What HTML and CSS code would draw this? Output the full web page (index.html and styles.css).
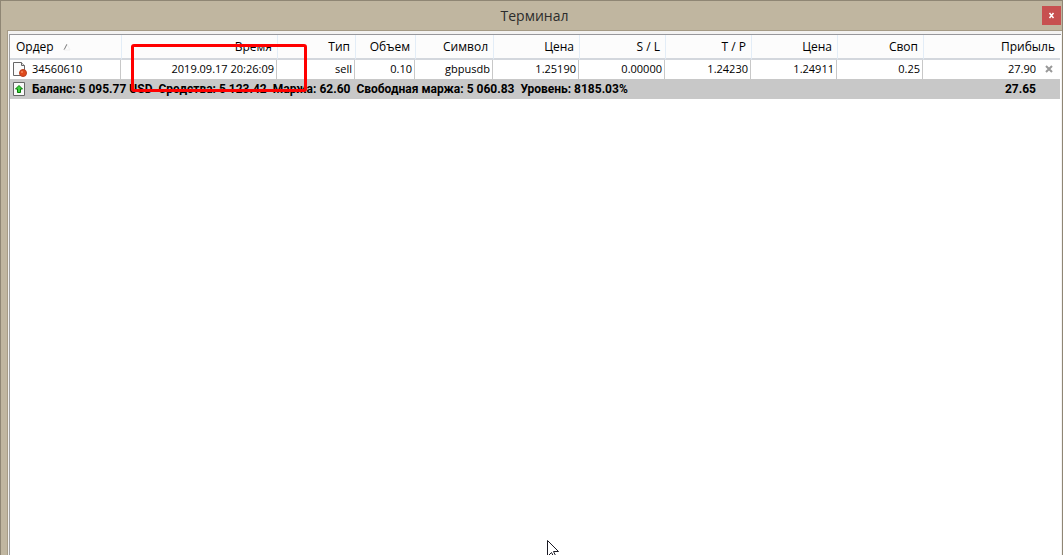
FILE: index.html
```html
<!DOCTYPE html>
<html lang="ru">
<head>
    <meta charset="UTF-8">
    <meta name="viewport" content="width=device-width, initial-scale=1.0">
    <title>Терминал</title>
    <link rel="stylesheet" href="styles.css">
</head>
<body>

<div class="window">
    <header class="titlebar">
        <h1>Терминал</h1>
        <button type="button" class="close" aria-label="Закрыть">
            <svg width="7" height="7" viewBox="0 0 7 7"><path d="M1.500 1l4 5M5.500 1l-4 5" stroke="#fff" stroke-width="1.500"/></svg>
        </button>
    </header>

    <main class="panel">
        <table class="orders">
            <colgroup>
                <col class="col-order">
                <col class="col-time">
                <col class="col-symbol">
                <col class="col-volume">
                <col class="col-symbol">
                <col class="col-price">
                <col class="col-price">
                <col class="col-price">
                <col class="col-price">
                <col class="col-price">
                <col>
            </colgroup>
            <thead>
                <tr>
                    <th class="first">Ордер
                        <svg class="sort" width="8" height="8" viewBox="0 0 8 8"><path d="M1 7L4 1" stroke="#777"/><path d="M4 1l3 6H1" fill="none" stroke="#f0f0f0"/></svg>
                    </th>
                    <th>Время</th>
                    <th>Тип</th>
                    <th>Объем</th>
                    <th>Символ</th>
                    <th>Цена</th>
                    <th>S / L</th>
                    <th>T / P</th>
                    <th>Цена</th>
                    <th>Своп</th>
                    <th>Прибыль</th>
                </tr>
            </thead>
            <tbody>
                <tr>
                    <td class="first">
                        <div class="cell">
                            <svg width="14" height="16" viewBox="0 0 14 16">
                                <path d="M.5 1.5h8l3 3v10H.5z" fill="#fbfbfb" stroke="#666"/>
                                <path d="M8.5 1.5v3h3" fill="#ddd" stroke="#666"/>
                                <circle cx="10" cy="12" r="3.5" fill="#e04a1c" stroke="#b84020"/>
                                <circle cx="9" cy="11" r="1" fill="#f58a5c"/>
                            </svg>
                            <span>34560610</span>
                        </div>
                    </td>
                    <td>2019.09.17 20:26:09</td>
                    <td>sell</td>
                    <td>0.10</td>
                    <td>gbpusdb</td>
                    <td>1.25190</td>
                    <td>0.00000</td>
                    <td>1.24230</td>
                    <td>1.24911</td>
                    <td>0.25</td>
                    <td class="profit">
                        <div class="cell cell-end">
                            <span>27.90</span>
                            <button type="button" class="close-order" aria-label="Закрыть ордер">
                                <svg width="8" height="8" viewBox="0 0 8 8"><path d="M1 1l6 6M7 1L1 7" stroke="#999" stroke-width="2"/></svg>
                            </button>
                        </div>
                    </td>
                </tr>
            </tbody>
            <tfoot>
                <tr>
                    <td class="first" colspan="10">
                        <div class="cell">
                            <svg width="14" height="14" viewBox="0 0 14 14">
                                <path d="M.5.5h11v13H.5z" fill="#f8f8f8" stroke="#666"/>
                                <path d="M6 3.5L9.500 7H7.500v3.500h-3V7h-2z" fill="#3fd23f" stroke="#087a08"/>
                            </svg>
                            <span class="balance">Баланс: 5 095.77 USD  Средства: 5 123.42  Маржа: 62.60  Свободная маржа: 5 060.83  Уровень: 8185.03%</span>
                        </div>
                    </td>
                    <td class="total">27.65</td>
                </tr>
            </tfoot>
        </table>
        <div class="highlight"></div>
    </main>

    <svg class="cursor" width="13" height="20" viewBox="0 0 13 20">
        <path d="M.5.5v16l4-4 3 6 2-1-3-6h5z" fill="#fff" stroke="#1a1a24"/>
    </svg>
</div>

</body>
</html>
```
FILE: styles.css
```css
* {
    box-sizing: border-box;
}
body {
    margin: 0;
    font-family: "Open Sans", "Noto Sans", sans-serif;
    font-size: 11px;
    color: #000;
}
.window {
    position: relative;
    display: flex;
    flex-direction: column;
    height: 100vh;
    overflow: hidden;
    padding-left: 6px;
    background: #c0b6a0;
    border: 1px solid #8f8674;
    border-bottom: 0;
}
.titlebar {
    display: flex;
    align-items: center;
    height: 29px;
    padding: 0 1px 0 20px;
}
h1 {
    flex: 1;
    margin: 0;
    font-size: 14px;
    font-weight: normal;
    line-height: 20px;
    text-align: center;
    color: #2c2c2c;
}
.close {
    display: flex;
    align-items: center;
    justify-content: center;
    width: 19px;
    height: 19px;
    padding: 0;
    border: 0;
    background: #c75050;
}
.panel {
    position: relative;
    flex: 1;
    padding: 3px 1px 0 1px;
    background: #f3f2f1;
    border-top: 1px solid #a59b86;
    border-left: 1px solid #a59b86;
}
.panel::before {
    content: "";
    position: absolute;
    inset: 3px 1px 0 1px;
    border-top: 1px solid #98989c;
    border-left: 1px solid #a0a0a0;
    background: #fff;
}
.orders {
    position: relative;
    width: 100%;
    padding: 1px 1px 0 1px;
    table-layout: fixed;
    border-spacing: 0;
    white-space: nowrap;
}
.col-order { width: 111px; }
.col-time { width: 156px; }
.col-symbol { width: 78px; }
.col-volume { width: 60px; }
.col-price { width: 86px; }

th {
    height: 25px;
    padding: 0 5px 0 0;
    font-size: 12px;
    font-weight: normal;
    line-height: 16px;
    text-align: right;
    background: #fcfcfc;
    border-bottom: 2px solid #d3d7dd;
}
th + th {
    border-left: 1px solid #e3edf7;
}
th.first {
    padding-left: 6px;
    text-align: left;
}
.sort {
    margin-left: 6px;
}
td {
    height: 19px;
    padding: 0 2px 2px 0;
    line-height: 16px;
    text-align: right;
    border-right: 1px solid #c8c8c8;
}
td:last-child {
    border-right: 0;
}
td.first {
    padding-left: 3px;
}
.cell {
    display: flex;
    align-items: center;
    gap: 5px;
}
.cell-end {
    justify-content: flex-end;
    gap: 9px;
}
td.profit {
    padding-right: 7px;
}
.close-order {
    display: flex;
    padding: 0;
    border: 0;
    background: none;
}
tfoot td {
    height: 20px;
    padding-bottom: 0;
    font-family: Roboto, "Open Sans", sans-serif;
    font-size: 12px;
    font-weight: bold;
    background: #c8c8c8;
}
.balance {
    white-space: pre;
}
td.total {
    padding-right: 24px;
}
/* frame around the open time */
.highlight {
    position: absolute;
    top: 13px;
    left: 123px;
    width: 176px;
    height: 48px;
    border: 3px solid #f00;
    border-radius: 3px;
}
.cursor {
    position: absolute;
    bottom: -5px;
    left: 546px;
}
```
